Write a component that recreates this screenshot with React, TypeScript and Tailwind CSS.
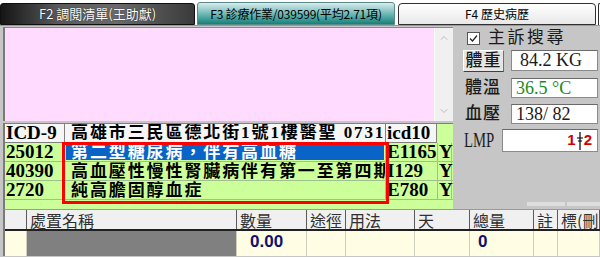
import React from 'react';
import { ChevronUp, ChevronDown } from 'lucide-react';

const cjk = "font-['Noto_Sans_CJK_TC',sans-serif]";
const mixed = "font-['Liberation_Serif','Noto_Sans_CJK_TC',serif]";

const diagnoses = [
  { icd9: '25012', name: '第二型糖尿病，伴有高血糖', icd10: 'E1165', selected: true },
  { icd9: '40390', name: '高血壓性慢性腎臟病伴有第一至第四期', icd10: 'I129', selected: false },
  { icd9: '2720', name: '純高膽固醇血症', icd10: 'E780', selected: false },
];

const orderCols = [
  { label: '', w: 'w-[22px]' },
  { label: '處置名稱', w: 'w-[210px]' },
  { label: '數量', w: 'w-[70px]' },
  { label: '途徑', w: 'w-[39px]' },
  { label: '用法', w: 'w-[69px]' },
  { label: '天', w: 'w-[55px]' },
  { label: '總量', w: 'w-[64px]' },
  { label: '註', w: 'w-[24px]' },
  { label: '標(刪', w: 'flex-1' },
];

const Tabs = () => (
  <div className={`h-[26px] bg-white flex items-end border-b border-[#9a9a9a] ${cjk}`}>
    <div className="w-[195px] h-[22px] rounded-t-[3px] border border-[#101010] bg-[linear-gradient(to_right,#151515,#5a5a5a_30%,#6a6a6a_60%,#3a3a3a)] flex items-center justify-center text-white text-[13px] [text-shadow:0_0_1px_#000]">
      F2 調閱清單(王助獻)
    </div>
    <div className="ml-[2px] w-[198px] h-[23px] rounded-t-[3px] border border-[#5a8a8a] bg-[linear-gradient(to_bottom,#d8ecec,#5fb0ac_60%,#14807a)] flex items-center justify-center text-black text-[12px] tracking-[-0.2px]">
      F3 診療作業/039599(平均2.71項)
    </div>
    <div className="ml-[3px] w-[198px] h-[22px] rounded-t-[4px] border border-[#303030] bg-[linear-gradient(to_bottom,#ffffff,#e8e8e8)] flex items-center justify-center text-black text-[12px]">
      F4 歷史病歷
    </div>
    <div className="ml-[2px] flex-1 h-[22px] rounded-tl-[4px] border-l border-t border-[#303030] bg-white" />
  </div>
);

const Memo = () => (
  <div className="h-[95px] flex border-l-2 border-[#7a7a7a] border-t border-t-[#8a8a8a]">
    <div className="flex-1 bg-[#ffdcff] border-r border-white" />
    <div className="w-[18px] bg-[#f0f0f0] flex flex-col items-center justify-between py-[4px] text-[#a8a8a8]">
      <ChevronUp size={12} strokeWidth={1.5} />
      <ChevronDown size={12} strokeWidth={1.5} />
    </div>
  </div>
);

const DiagnosisGrid = () => (
  <div className={`relative h-[86px] mt-[2px] bg-[#ccff99] border-l-2 border-[#7a7a7a] ${mixed} text-black`}>
    <div className="flex h-[20px] border-t border-[#808080]">
      <div className="w-[60px] h-full bg-[#f6f6f6] border-r border-b border-[#808080] text-[19px] leading-[18px] pl-[1px] font-bold">ICD-9</div>
      <div className="w-[321px] h-full bg-[#f6f6f6] border-r border-b border-[#808080] text-[17px] leading-[18px] pl-[6px] tracking-[1.9px] overflow-hidden whitespace-nowrap font-bold">
        高雄市三民區德北街1號1樓醫聖 0731
      </div>
      <div className="w-[51px] h-full bg-[#f6f6f6] border-r border-b border-[#808080] text-[19px] leading-[18px] pl-[1px] font-bold">icd10</div>
    </div>
    {diagnoses.map((d) => (
      <div key={d.icd9} className="flex h-[19px] border-b border-[#9fbf8f]">
        <div className="w-[60px] h-full border-r border-[#9fbf8f] text-[19px] leading-[18px] pl-[1px] font-bold">{d.icd9}</div>
        <div className="w-[321px] h-full border-r border-[#9fbf8f] p-[1px] overflow-hidden">
          <div
            className={`h-full pl-[5px] text-[17px] leading-[17px] tracking-[1.9px] whitespace-nowrap font-bold ${
              d.selected ? 'bg-[#0a64c8] text-white' : ''
            }`}
          >
            {d.name}
          </div>
        </div>
        <div className="w-[52px] h-full border-r border-[#9fbf8f] text-[19px] leading-[18px] pl-[1px] font-bold">{d.icd10}</div>
        <div className="w-[14px] h-full border-r border-[#9fbf8f] text-[19px] leading-[18px] pl-[1px] font-bold">Y</div>
      </div>
    ))}
    <div className="absolute left-[57px] top-[19px] w-[327px] h-[62px] border-[3px] border-[#ff0000] pointer-events-none" />
  </div>
);

const VitalInput = ({ children, className = '' }: { children: React.ReactNode; className?: string }) => (
  <div className={`flex-1 h-full bg-white border border-[#8a8a8a] border-t-[#6a6a6a] flex items-center text-[18px] ${className}`}>
    {children}
  </div>
);

const SidePanel = () => (
  <div className={`flex-1 flex flex-col pt-[2px] ${mixed} text-[#1a1a1a]`}>
    <div className="h-[20px] flex items-center pl-[14px]">
      <div className="w-[13px] h-[13px] border border-[#555] bg-white flex items-center justify-center">
        <svg width="9" height="9" viewBox="0 0 9 9">
          <path d="M1 4.5 L3.5 7 L8 1.5" fill="none" stroke="#222" strokeWidth="1.2" />
        </svg>
      </div>
      <span className="ml-[8px] text-[17px] leading-[20px] tracking-[2.5px]">主訴搜尋</span>
    </div>
    <div className="h-[21px] mt-[2px] flex items-center pl-[10px] pr-[2px]">
      <div className="w-[41px] h-[22px] mr-[7px] bg-[#e6e6e6] border border-t-white border-l-white border-r-[#707070] border-b-[#404040] flex items-center justify-center text-[17px] tracking-[1px] font-medium">
        體重
      </div>
      <VitalInput className="pl-[8px]">84.2 KG</VitalInput>
    </div>
    <div className="h-[20px] mt-[7px] flex items-center pl-[12px] pr-[2px]">
      <span className="w-[46px] text-[17px] tracking-[1px] font-medium">體溫</span>
      <VitalInput className="pl-[4px] text-[#1c8a1c]">36.5 °C</VitalInput>
    </div>
    <div className="h-[20px] mt-[6px] flex items-center pl-[12px] pr-[2px]">
      <span className="w-[46px] text-[17px] tracking-[1px] font-medium">血壓</span>
      <VitalInput className="pl-[4px]">138/ 82</VitalInput>
    </div>
    <div className="h-[23px] mt-[5px] flex items-center pl-[11px] pr-[2px]">
      <span className="w-[38px] text-[21px] leading-[21px] inline-block scale-x-[0.7] origin-left whitespace-nowrap">LMP</span>
      <VitalInput className="justify-end pr-[5px]">
        <span className="text-[#d00000] font-bold text-[15px] font-['Liberation_Sans',sans-serif]">1</span>
        <svg width="6" height="18" viewBox="0 0 6 18" className="mx-[1px]">
          <path d="M3 0 V18 M0 6 H6 M1 9 H5" stroke="#000" strokeWidth="1.2" />
        </svg>
        <span className="text-[#d00000] font-bold text-[15px] font-['Liberation_Sans',sans-serif]">2</span>
      </VitalInput>
    </div>
    <div className="mt-auto mb-[3px] flex justify-end gap-[2px]">
      <div className="w-[38px] h-[4px] bg-[#dedede]" />
      <div className="w-[33px] h-[4px] bg-[#dedede]" />
    </div>
  </div>
);

const OrderTable = () => (
  <div className={`h-[47px] pl-[3px] ${cjk}`}>
    <div className="h-full border-l-2 border-[#7a7a7a] border-t border-t-[#9a9a9a] flex flex-col">
      <div className="h-[21px] flex bg-[#f0f0f0] border-b-2 border-[#202020]">
        {orderCols.map((c, i) => (
          <div
            key={i}
            className={`${c.w} h-full border-r border-[#5a5a5a] pl-[3px] text-[16px] leading-[20px] text-[#303030] whitespace-nowrap`}
          >
            {c.label}
          </div>
        ))}
      </div>
      <div className="flex-1 flex bg-[#fffde3]">
        {orderCols.map((c, i) => (
          <div
            key={i}
            className={`${c.w} h-full border-r border-[#cfcfc0] font-['Liberation_Sans',sans-serif] font-bold text-[17px] leading-[22px] text-[#101070] ${
              i === 1 ? 'bg-[#808080]' : ''
            } ${i === 2 ? 'pl-[13px]' : 'pl-[8px]'}`}
          >
            {i === 2 ? '0.00' : i === 6 ? '0' : ''}
          </div>
        ))}
      </div>
    </div>
  </div>
);

export default function App() {
  return (
    <div className="w-[600px] h-[257px] overflow-hidden bg-[#c6c6c6] flex flex-col">
      <Tabs />
      <div className="flex h-[183px]">
        <div className="w-[453px] flex flex-col pl-[3px] pt-[1px]">
          <Memo />
          <DiagnosisGrid />
        </div>
        <SidePanel />
      </div>
      <OrderTable />
    </div>
  );
}
